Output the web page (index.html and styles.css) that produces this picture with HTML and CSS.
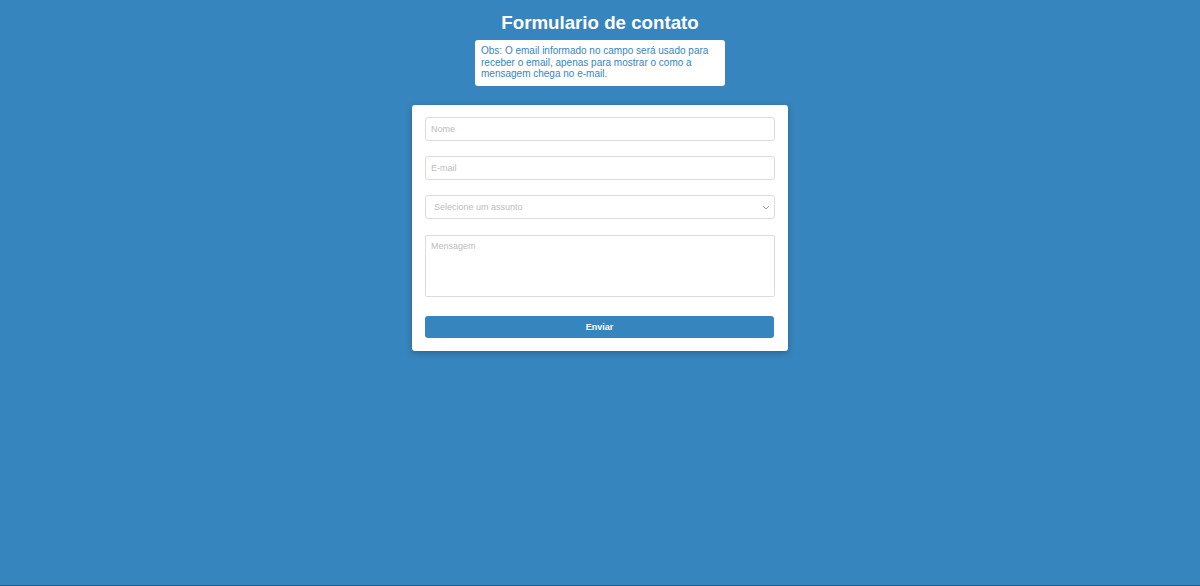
FILE: index.html
```html
<!DOCTYPE html>
<html lang="pt">
<head>
<meta charset="utf-8">
<title>Formulario de contato</title>
<link rel="stylesheet" href="styles.css">
</head>
<body>
<main class="page">
  <h1 class="title">Formulario de contato</h1>
  <p class="note">Obs: O email informado no campo será usado para receber o email, apenas para mostrar o como a mensagem chega no e-mail.</p>
  <form class="card">
    <input class="field" type="text" placeholder="Nome">
    <input class="field" type="email" placeholder="E-mail">
    <div class="select-wrap">
      <select class="field select">
        <option>Selecione um assunto</option>
      </select>
      <svg class="chev" width="8" height="5" viewBox="0 0 8 5"><path d="M1 1l3 3 3-3" fill="none" stroke="#999" stroke-width="1"/></svg>
    </div>
    <textarea class="field area" placeholder="Mensagem"></textarea>
    <button class="btn" type="button">Enviar</button>
  </form>
</main>
</body>
</html>
```
FILE: styles.css
```css
* { box-sizing: border-box; }
html, body { margin: 0; height: 100%; }
body {
  background: #3785be;
  font-family: "Liberation Sans", Arial, sans-serif;
  border-bottom: 1px solid #1e5b88;
  min-height: 100vh;
}
.page {
  display: flex;
  flex-direction: column;
  align-items: center;
  padding-top: 12px;
}
.title {
  margin: 0;
  color: #fff;
  font-size: 18.72px;
  font-weight: bold;
  line-height: 22px;
}
.note {
  margin: 6px 0 0;
  width: 250px;
  background: #fff;
  color: #3785be;
  font-size: 10px;
  line-height: 11.5px;
  padding: 5px 6px 6px;
  border-radius: 3px;
}
.card {
  margin-top: 19px;
  width: 376px;
  background: #fff;
  border-radius: 3px;
  box-shadow: 0 2px 6px rgba(0,0,0,0.25);
  padding: 12px 13px 13px 13px;
  display: flex;
  flex-direction: column;
}
.field {
  display: block;
  width: 350px;
  height: 24px;
  margin: 0;
  border: 1px solid #dcdcdc;
  border-radius: 3px;
  font-family: "Liberation Sans", Arial, sans-serif;
  font-size: 9px;
  padding: 0 5px;
  background: #fff;
  color: #333;
  outline: none;
}
.field::placeholder { color: #bcbcbc; }
.field + .field, .select-wrap { margin-top: 15px; }
.select-wrap { position: relative; height: 24px; }
.select {
  appearance: none;
  -webkit-appearance: none;
  color: #bcbcbc;
  padding-left: 8px;
}
.chev { position: absolute; right: 5px; top: 10px; }
.area {
  height: 62px;
  margin-top: 16px;
  padding: 5px 5px;
  border-radius: 2px;
  resize: none;
}
.btn {
  margin-top: 19px;
  width: 349px;
  height: 22px;
  border: 0;
  border-radius: 3px;
  background: #3785be;
  color: #fff;
  font-family: "Liberation Sans", Arial, sans-serif;
  font-size: 9px;
  font-weight: bold;
}
```
